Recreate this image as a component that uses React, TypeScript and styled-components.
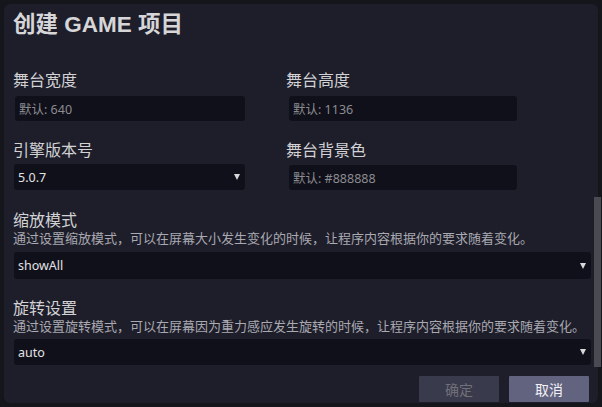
import React from "react";
import styled, { createGlobalStyle } from "styled-components";

const Global = createGlobalStyle`
  html, body { margin: 0; padding: 0; background: #15151c; }
  body { font-family: "Noto Sans CJK SC", "Noto Sans", sans-serif; overflow: hidden; }
  * { box-sizing: border-box; }
`;

const Page = styled.div`
  position: relative;
  width: 602px;
  height: 407px;
  padding: 4px 0 0 4px;
  overflow: hidden;
`;

const Dialog = styled.div`
  width: 594px;
  height: 399px;
  background: #1e1e2b;
  border-radius: 6px;
  padding: 6px 7px 0 10px;
  display: flex;
  flex-direction: column;
`;

const Title = styled.h1`
  margin: 0 0 0 -1px;
  font-family: "Liberation Sans", "Noto Sans CJK SC", sans-serif;
  font-size: 22.5px;
  line-height: 30px;
  font-weight: 700;
  color: #d6d6d8;
`;

const Grid = styled.div`
  display: grid;
  grid-template-columns: 231px 230px;
  column-gap: 42px;
  row-gap: 18px;
  margin-top: 29px;
`;

const Field = styled.div`
  display: flex;
  flex-direction: column;
`;

const Label = styled.div`
  margin-left: -1px;
  padding-top: 1px;
  font-family: "Liberation Sans", "Noto Sans CJK SC", sans-serif;
  font-size: 16px;
  line-height: 21px;
  color: #d2d2d4;
`;

const Desc = styled.div`
  margin-left: -1px;
  font-family: "Liberation Sans", "Noto Sans CJK SC", sans-serif;
  font-size: 13px;
  line-height: 16px;
  color: #a9a9b0;
  white-space: nowrap;
`;

const Box = styled.div<{ $h: number; $gap: number; $inset?: number }>`
  height: ${(p) => p.$h}px;
  margin-top: ${(p) => p.$gap}px;
  margin-left: ${(p) => p.$inset ?? 0}px;
  background: #10101a;
  border-radius: 3px;
  display: flex;
  align-items: center;
  justify-content: space-between;
  padding: 0 5px 0 4px;
  font-family: "Noto Sans", "Noto Sans CJK SC", sans-serif;
  font-size: 12.5px;
`;

const Placeholder = styled.span`
  color: #8b8b90;
`;

const Value = styled.span`
  color: #e2e2e4;
`;

const Arrow = styled.span`
  width: 0;
  height: 0;
  border-left: 3.5px solid transparent;
  border-right: 3.5px solid transparent;
  border-top: 6px solid #d8d8dc;
`;

const Section = styled.div<{ $gap: number }>`
  display: flex;
  flex-direction: column;
  margin-top: ${(p) => p.$gap}px;
`;

const Footer = styled.div`
  display: flex;
  justify-content: flex-end;
  gap: 10px;
  margin-top: 11px;
  padding-right: 2px;
`;

const Button = styled.button<{ $primary?: boolean }>`
  width: 80px;
  height: 26px;
  border: none;
  border-radius: 1px;
  font-family: "Noto Sans CJK SC", sans-serif;
  font-size: 14px;
  background: ${(p) => (p.$primary ? "#62637f" : "#393a4b")};
  color: ${(p) => (p.$primary ? "#f2f2f6" : "#707079")};
  padding: 0;
`;

const Scrollbar = styled.div`
  position: absolute;
  left: 594px;
  top: 197px;
  width: 7px;
  height: 170px;
  background: #4a4a53;
`;

function Select({ value, h, gap }: { value: string; h: number; gap: number }) {
  return (
    <Box $h={h} $gap={gap}>
      <Value>{value}</Value>
      <Arrow />
    </Box>
  );
}

export default function App() {
  return (
    <>
      <Global />
      <Page>
        <Dialog>
          <Title>创建 GAME 项目</Title>
          <Grid>
            <Field>
              <Label>舞台宽度</Label>
              <Box $h={25} $gap={5} $inset={1}>
                <Placeholder>默认: 640</Placeholder>
              </Box>
            </Field>
            <Field>
              <Label>舞台高度</Label>
              <Box $h={25} $gap={5} $inset={2}>
                <Placeholder>默认: 1136</Placeholder>
              </Box>
            </Field>
            <Field>
              <Label>引擎版本号</Label>
              <Select value="5.0.7" h={26} gap={3} />
            </Field>
            <Field>
              <Label>舞台背景色</Label>
              <Box $h={25} $gap={4} $inset={2}>
                <Placeholder>默认: #888888</Placeholder>
              </Box>
            </Field>
          </Grid>
          <Section $gap={19}>
            <Label>缩放模式</Label>
            <Desc>通过设置缩放模式，可以在屏幕大小发生变化的时候，让程序内容根据你的要求随着变化。</Desc>
            <Select value="showAll" h={27} gap={5} />
          </Section>
          <Section $gap={18}>
            <Label>旋转设置</Label>
            <Desc>通过设置旋转模式，可以在屏幕因为重力感应发生旋转的时候，让程序内容根据你的要求随着变化。</Desc>
            <Select value="auto" h={26} gap={4} />
          </Section>
          <Footer>
            <Button>确定</Button>
            <Button $primary>取消</Button>
          </Footer>
        </Dialog>
        <Scrollbar />
      </Page>
    </>
  );
}
